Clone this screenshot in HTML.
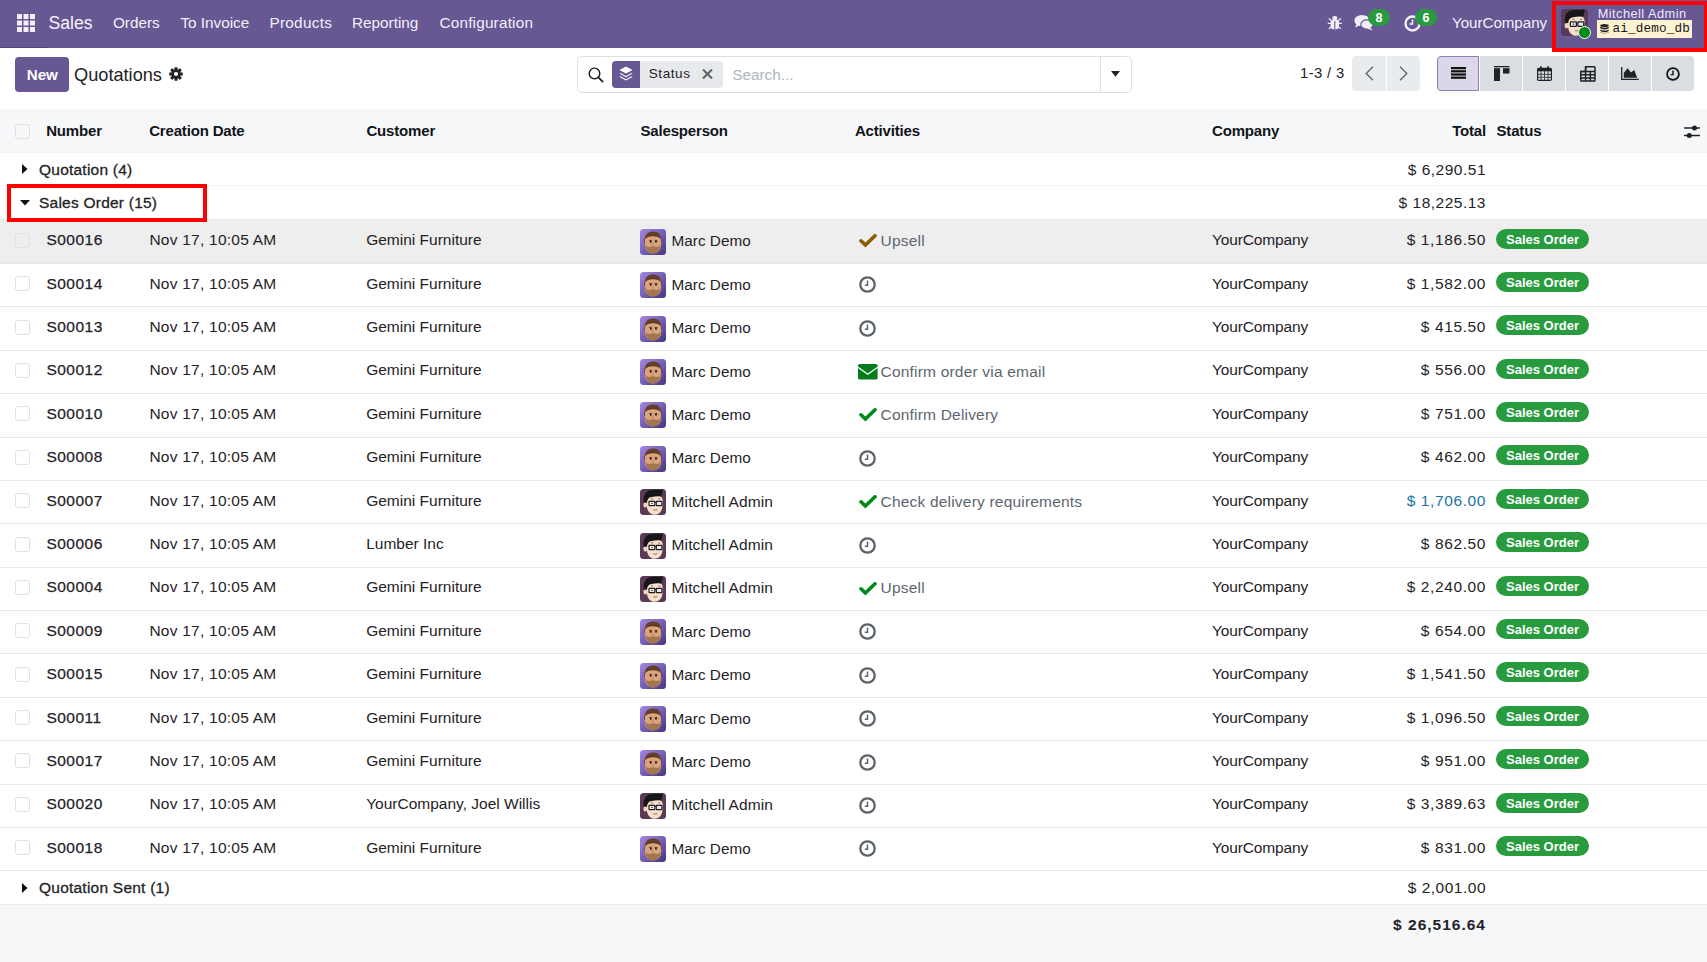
<!DOCTYPE html>
<html><head><meta charset="utf-8"><title>Quotations</title><style>
html,body{margin:0;padding:0;width:1707px;height:962px;overflow:hidden;background:#fff;font-family:"Liberation Sans", sans-serif;}
.a{position:absolute;white-space:nowrap;}
.cb{width:15px;height:15px;border:1px solid #dfe1e4;border-radius:3px;box-sizing:border-box;background:transparent;}
.badge{background:#2a9a40;color:#fff;border-radius:9px;font-size:12.5px;font-weight:bold;text-align:center;line-height:18.6px;}
.sbadge{width:93px;height:20px;border-radius:10px;background:#289b3e;color:#fff;font-size:13px;font-weight:bold;line-height:21px;text-align:center;}
</style></head>
<body>
<div class="a" style="left:0;top:0;width:1707px;height:48px;background:#675893"></div>
<div class="a" style="left:0;top:47px;width:1707px;height:1px;background:#62558c"></div>
<div class="a" style="left:0;top:47px;width:48px;height:1px;background:#54487a"></div>
<svg class="a" style="left:17px;top:14px" width="18" height="18" viewBox="0 0 18 18"><rect x="0.0" y="0.0" width="5" height="5" fill="#f3f0fa"/><rect x="6.5" y="0.0" width="5" height="5" fill="#f3f0fa"/><rect x="13.0" y="0.0" width="5" height="5" fill="#f3f0fa"/><rect x="0.0" y="6.5" width="5" height="5" fill="#f3f0fa"/><rect x="6.5" y="6.5" width="5" height="5" fill="#f3f0fa"/><rect x="13.0" y="6.5" width="5" height="5" fill="#f3f0fa"/><rect x="0.0" y="13.0" width="5" height="5" fill="#f3f0fa"/><rect x="6.5" y="13.0" width="5" height="5" fill="#f3f0fa"/><rect x="13.0" y="13.0" width="5" height="5" fill="#f3f0fa"/></svg>
<div class="a" style="left:48.50px;top:12.54px;font-size:17.6px;line-height:21.12px;color:#f6f4fb;font-weight:normal;">Sales</div>
<div class="a" style="left:112.90px;top:14.02px;font-size:15.3px;line-height:18.36px;color:#f2eff8;font-weight:normal;">Orders</div>
<div class="a" style="left:180.40px;top:14.02px;font-size:15.3px;line-height:18.36px;color:#f2eff8;font-weight:normal;">To Invoice</div>
<div class="a" style="left:269.40px;top:14.02px;font-size:15.3px;line-height:18.36px;color:#f2eff8;font-weight:normal;letter-spacing:0.3px;">Products</div>
<div class="a" style="left:352.00px;top:14.02px;font-size:15.3px;line-height:18.36px;color:#f2eff8;font-weight:normal;">Reporting</div>
<div class="a" style="left:439.50px;top:14.02px;font-size:15.3px;line-height:18.36px;color:#f2eff8;font-weight:normal;letter-spacing:0.2px;">Configuration</div>
<svg class="a" style="left:1327px;top:15px" width="15" height="15" viewBox="0 0 15 15"><ellipse cx="7.8" cy="2.9" rx="2.6" ry="2" fill="#f2eff8"/><rect x="3.6" y="4.6" width="8.4" height="9.6" rx="3" fill="#f2eff8"/><path d="M7.8 6 V14" stroke="#675893" stroke-width="1.1"/><path d="M3.8 8.3 H0.8 M11.8 8.3 H14.8 M4.2 5.4 L1.8 3.4 M11.4 5.4 L13.8 3.4 M4.2 11.6 L1.8 13.9 M11.4 11.6 L13.8 13.9" stroke="#f2eff8" stroke-width="1.3"/></svg>
<svg class="a" style="left:1354px;top:14px" width="20" height="17" viewBox="0 0 20 17"><ellipse cx="8" cy="6.5" rx="7.6" ry="5.6" fill="#f2eff8"/><path d="M2.5 10 L1.2 13.5 L6 11.3Z" fill="#f2eff8"/><ellipse cx="13" cy="10.5" rx="6.2" ry="4.6" fill="#f2eff8" stroke="#675893" stroke-width="1.2"/><path d="M16 13.5 L19 16.5 L13 14.5Z" fill="#f2eff8"/></svg>
<div class="a badge" style="left:1368px;top:9px;width:22px;height:17px">8</div>
<svg class="a" style="left:1403.5px;top:14.5px" width="17" height="17" viewBox="0 0 17 17"><circle cx="8.5" cy="8.5" r="7" fill="none" stroke="#f2eff8" stroke-width="2.4"/><path d="M8.5 4.5 V9 H5.5" fill="none" stroke="#f2eff8" stroke-width="1.6"/></svg>
<div class="a badge" style="left:1415px;top:9px;width:22px;height:17px">6</div>
<div class="a" style="left:1452.00px;top:14.01px;font-size:15.1px;line-height:18.12px;color:#f2eff8;font-weight:normal;">YourCompany</div>
<svg class="a" style="left:1561px;top:9px" width="27" height="27" viewBox="0 0 26 26">
<rect width="26" height="26" rx="3.5" fill="#5a3a56"/>
<ellipse cx="5.4" cy="15.8" rx="1.9" ry="2.8" fill="#f4d3bd"/>
<path d="M6.6 9 C7.5 7 11 6.6 15 6.6 C19.5 6.6 22.4 7.5 22.6 11 L22.6 16 C22.4 22 19.2 25.8 14.6 25.8 C10.5 25.8 7.3 22.8 6.8 17 Z" fill="#f8dfcb"/>
<path d="M3.8 13.5 C3 8.5 4.5 3.5 8.5 1.8 C12.5 0.4 18 1.2 22.8 0.6 C22.6 3.5 22 6 21 7.4 C18 7 14 7.4 10.5 8.3 C8.6 8.8 7.3 10.5 6.9 13.6 C5.8 13.8 4.8 13.8 3.8 13.5 Z" fill="#171717"/>
<path d="M11 10 L13 9.9 M18.3 9.9 L20.3 10" stroke="#5a3a2a" stroke-width="0.7"/>
<rect x="9" y="12.3" width="5.8" height="4.4" rx="0.6" fill="#f3f3f3" stroke="#1e1e1e" stroke-width="1.2"/>
<rect x="16.3" y="12.3" width="5.6" height="4.4" rx="0.6" fill="#e9e9e9" stroke="#1e1e1e" stroke-width="1.2"/>
<path d="M14.8 13.3 L16.3 13.3" stroke="#1e1e1e" stroke-width="1"/>
<circle cx="12" cy="14.5" r="0.8" fill="#333"/>
<path d="M13 19.9 Q15.2 21.6 17.4 19.8 L17 21 Q15.2 22 13.5 21 Z" fill="#7d5547"/>
</svg>
<div class="a" style="left:1577.5px;top:25.5px;width:13px;height:13px;border-radius:50%;background:#008a1c;border:1.5px solid #fff;box-sizing:border-box"></div>
<div class="a" style="left:1597.70px;top:6.08px;font-size:12.8px;line-height:15.36px;color:#efe9fb;font-weight:normal;letter-spacing:0.45px;">Mitchell Admin</div>
<div class="a" style="left:1597px;top:20px;width:95px;height:18px;background:#fdf3d2"></div>
<svg class="a" style="left:1599.5px;top:24px" width="9" height="10" viewBox="0 0 9 10"><ellipse cx="4.5" cy="1.6" rx="4.2" ry="1.5" fill="#222"/><path d="M0.3 2.6 Q4.5 5 8.7 2.6 V4.2 Q4.5 6.6 0.3 4.2Z M0.3 5.4 Q4.5 7.8 8.7 5.4 V7 Q4.5 9.4 0.3 7Z M0.3 8 Q4.5 10.4 8.7 8 V8.6 Q4.5 10.5 0.3 8.6Z" fill="#222"/></svg>
<div class="a" style="left:1612.50px;top:21.18px;font-size:12.7px;line-height:15.24px;color:#1a1a1a;font-weight:normal;font-family:'Liberation Mono',monospace;letter-spacing:0.15px;">ai_demo_db</div>
<div class="a" style="left:1552px;top:1px;width:156px;height:51px;border:4px solid #ff0000;box-sizing:border-box"></div>
<div class="a" style="left:15px;top:57px;width:54px;height:35px;background:#675893;border-radius:4px"></div>
<div class="a" style="left:26.70px;top:65.51px;font-size:15.2px;line-height:18.24px;color:#ffffff;font-weight:bold;">New</div>
<div class="a" style="left:74.00px;top:64.77px;font-size:18.2px;line-height:21.84px;color:#1f2226;font-weight:normal;">Quotations</div>
<svg class="a" style="left:168.5px;top:67.3px" width="14" height="14" viewBox="0 0 14 14"><g fill="#1f2226"><circle cx="7" cy="7" r="4.7"/><rect x="5.5" y="0.2" width="3" height="13.6" rx="0.3"/><rect x="5.5" y="0.2" width="3" height="13.6" rx="0.3" transform="rotate(45 7 7)"/><rect x="5.5" y="0.2" width="3" height="13.6" rx="0.3" transform="rotate(90 7 7)"/><rect x="5.5" y="0.2" width="3" height="13.6" rx="0.3" transform="rotate(135 7 7)"/></g><circle cx="7" cy="7" r="2.1" fill="#fff"/></svg>
<div class="a" style="left:577px;top:56px;width:555px;height:37px;border:1px solid #dcdfe3;border-radius:5px;box-sizing:border-box;background:#fff"></div>
<div class="a" style="left:1100px;top:57px;width:1px;height:35px;background:#dcdfe3"></div>
<svg class="a" style="left:588px;top:66.5px" width="16" height="16" viewBox="0 0 16 16"><circle cx="6.5" cy="6.4" r="5.3" fill="none" stroke="#1a1c20" stroke-width="1.45"/><path d="M10.4 10.3 L14.6 14.6" stroke="#1a1c20" stroke-width="1.7" stroke-linecap="round"/></svg>
<div class="a" style="left:612px;top:61px;width:111px;height:27px;background:#e7e9ed;border-radius:4px"></div>
<div class="a" style="left:612px;top:61px;width:28px;height:27px;background:#675893;border-radius:4px 0 0 4px"></div>
<svg class="a" style="left:619px;top:65.5px" width="14" height="15" viewBox="0 0 14 15"><path d="M7 0.5 L13.5 4 L7 7.5 L0.5 4 Z" fill="#fff"/><path d="M1.5 7 L7 10 L12.5 7 L13.5 7.6 L7 11.2 L0.5 7.6 Z" fill="#fff"/><path d="M1.5 10.3 L7 13.3 L12.5 10.3 L13.5 10.9 L7 14.5 L0.5 10.9 Z" fill="#fff"/></svg>
<div class="a" style="left:648.70px;top:65.83px;font-size:13.6px;line-height:16.32px;color:#1f2226;font-weight:normal;letter-spacing:0.55px;">Status</div>
<svg class="a" style="left:701.5px;top:69px" width="11" height="10" viewBox="0 0 11 10"><path d="M1 0.5 L10 9.5 M10 0.5 L1 9.5" stroke="#5f646b" stroke-width="2.1"/></svg>
<div class="a" style="left:732.30px;top:65.92px;font-size:15.3px;line-height:18.36px;color:#b0b5be;font-weight:normal;">Search...</div>
<svg class="a" style="left:1111px;top:71px" width="9" height="6" viewBox="0 0 9 6"><path d="M0 0 H9 L4.5 5.8Z" fill="#1f2226"/></svg>
<div class="a" style="left:1300.00px;top:64.69px;font-size:14.8px;line-height:17.76px;color:#1f2226;font-weight:normal;letter-spacing:0.4px;">1-3 / 3</div>
<div class="a" style="left:1352px;top:56px;width:68px;height:34.5px;background:#e9ecee;border-radius:4px"></div>
<div class="a" style="left:1386px;top:56px;width:1px;height:34.5px;background:#fff"></div>
<svg class="a" style="left:1365px;top:65.5px" width="9" height="15" viewBox="0 0 9 15"><path d="M8 0.7 L1.2 7.5 L8 14.3" fill="none" stroke="#5f646b" stroke-width="1.3"/></svg>
<svg class="a" style="left:1399px;top:65.5px" width="9" height="15" viewBox="0 0 9 15"><path d="M1 0.7 L7.8 7.5 L1 14.3" fill="none" stroke="#5f646b" stroke-width="1.3"/></svg>
<div class="a" style="left:1437px;top:56px;width:42px;height:35px;background:#dbd7e8;border:1px solid #8b7fb5;box-sizing:border-box;border-radius:4px 0 0 4px;"></div>
<div class="a" style="left:1480px;top:56px;width:42px;height:35px;background:#dadde1;"></div>
<div class="a" style="left:1523px;top:56px;width:42px;height:35px;background:#dadde1;"></div>
<div class="a" style="left:1566px;top:56px;width:42px;height:35px;background:#dadde1;"></div>
<div class="a" style="left:1609px;top:56px;width:42px;height:35px;background:#dadde1;"></div>
<div class="a" style="left:1652px;top:56px;width:42px;height:35px;background:#dadde1;border-radius:0 4px 4px 0;"></div>
<svg class="a" style="left:1450.5px;top:67px" width="15" height="12" viewBox="0 0 15 12"><g fill="#111"><rect y="0" width="15" height="2.2"/><rect y="3.2" width="15" height="2.2"/><rect y="6.4" width="15" height="2.2"/><rect y="9.6" width="15" height="2.2"/></g></svg>
<svg class="a" style="left:1493.5px;top:65.5px" width="16" height="15" viewBox="0 0 16 15"><g fill="#1f2226"><rect x="0" y="0" width="15.5" height="1.3"/><rect x="0" y="2.2" width="6" height="12.8"/><rect x="9" y="2.2" width="6.5" height="5.3"/></g></svg>
<svg class="a" style="left:1537px;top:65.5px" width="15" height="15" viewBox="0 0 15 15"><rect x="0.6" y="2.3" width="13.8" height="12.1" rx="1.2" fill="none" stroke="#1f2226" stroke-width="1.2"/><rect x="0.6" y="2.3" width="13.8" height="3" fill="#1f2226"/><rect x="3" y="0.3" width="1.8" height="3.5" rx="0.5" fill="#1f2226"/><rect x="10.2" y="0.3" width="1.8" height="3.5" rx="0.5" fill="#1f2226"/><path d="M0.6 8.3 H14.4 M0.6 11.3 H14.4 M4 5 V14.4 M7.5 5 V14.4 M11 5 V14.4" stroke="#1f2226" stroke-width="0.8"/></svg>
<svg class="a" style="left:1579.5px;top:65.8px" width="16" height="16" viewBox="0 0 16 16"><path d="M5.6 0.8 H14.2 Q15 0.8 15 1.6 V14.2 Q15 15 14.2 15 H1.6 Q0.8 15 0.8 14.2 V5.6 H5.6 Z" fill="none" stroke="#1f2226" stroke-width="1.5"/><path d="M5.6 0.8 V15 M10.3 5.6 V15 M0.8 5.6 H15 M0.8 8.8 H15 M0.8 12 H15" stroke="#1f2226" stroke-width="1.5"/></svg>
<svg class="a" style="left:1621px;top:67px" width="18" height="13" viewBox="0 0 18 13"><path d="M0.7 0 V12.3 H17.8" fill="none" stroke="#1f2226" stroke-width="1.3"/><path d="M2.8 10.8 V5.8 L6.6 1.2 L10 5.6 L13.2 3 L16.2 10.8 Z" fill="#1f2226"/></svg>
<svg class="a" style="left:1666px;top:67px" width="14" height="14" viewBox="0 0 14 14"><circle cx="7" cy="7" r="5.9" fill="none" stroke="#111" stroke-width="1.8"/><path d="M7 3.5 V7.6 H4.6" fill="none" stroke="#111" stroke-width="1.4"/></svg>
<div class="a" style="left:0;top:109px;width:1707px;height:43.5px;background:#f6f7f9;border-bottom:1px solid #f1f2f4;box-sizing:border-box"></div>
<div class="a cb" style="left:15.3px;top:124px"></div>
<div class="a" style="left:46.20px;top:122.30px;font-size:15px;line-height:18.0px;color:#111418;font-weight:bold;letter-spacing:-0.17px;">Number</div>
<div class="a" style="left:149.20px;top:122.30px;font-size:15px;line-height:18.0px;color:#111418;font-weight:bold;letter-spacing:-0.17px;">Creation Date</div>
<div class="a" style="left:366.40px;top:122.30px;font-size:15px;line-height:18.0px;color:#111418;font-weight:bold;letter-spacing:-0.17px;">Customer</div>
<div class="a" style="left:640.50px;top:122.30px;font-size:15px;line-height:18.0px;color:#111418;font-weight:bold;letter-spacing:-0.17px;">Salesperson</div>
<div class="a" style="left:854.90px;top:122.30px;font-size:15px;line-height:18.0px;color:#111418;font-weight:bold;letter-spacing:-0.17px;">Activities</div>
<div class="a" style="left:1212.00px;top:122.30px;font-size:15px;line-height:18.0px;color:#111418;font-weight:bold;letter-spacing:-0.17px;">Company</div>
<div class="a" style="left:1496.50px;top:122.30px;font-size:15px;line-height:18.0px;color:#111418;font-weight:bold;letter-spacing:-0.17px;">Status</div>
<div class="a" style="right:221.00px;top:122.30px;font-size:15px;line-height:18.0px;color:#111418;font-weight:bold;letter-spacing:-0.17px;">Total</div>
<svg class="a" style="left:1684px;top:124px" width="16" height="15" viewBox="0 0 16 15"><path d="M0.5 4 H15.5 M0.5 11.5 H15.5" stroke="#1f2226" stroke-width="1.5" stroke-linecap="round"/><circle cx="10.5" cy="4" r="2.5" fill="#1f2226"/><circle cx="5.3" cy="11.5" r="2.5" fill="#1f2226"/></svg>
<div class="a" style="left:0;top:152.5px;width:1707px;height:33px;border-bottom:1px solid #f4f4f5;box-sizing:border-box;background:#fff"></div>
<svg class="a" style="left:21.5px;top:164.10px" width="6" height="10" viewBox="0 0 6 10"><path d="M0 0 V10 L5.5 5Z" fill="#111"/></svg>
<div class="a" style="left:39.00px;top:160.53px;font-size:15.5px;line-height:18.6px;color:#1f2226;font-weight:normal;-webkit-text-stroke:0.3px #1f2226;letter-spacing:0.23px;">Quotation (4)</div>
<div class="a" style="right:221.00px;top:160.53px;font-size:15.5px;line-height:18.6px;color:#1f2226;font-weight:normal;letter-spacing:0.5px;">$ 6,290.51</div>
<div class="a" style="left:0;top:185.5px;width:1707px;height:34.1px;border-bottom:1px solid #eaeaec;box-sizing:border-box;background:#fff"></div>
<svg class="a" style="left:19.5px;top:199.75px" width="10" height="6" viewBox="0 0 10 6"><path d="M0 0 H10 L5 5.5Z" fill="#111"/></svg>
<div class="a" style="left:39.00px;top:194.08px;font-size:15.5px;line-height:18.6px;color:#1f2226;font-weight:normal;-webkit-text-stroke:0.3px #1f2226;letter-spacing:0.23px;">Sales Order (15)</div>
<div class="a" style="right:221.00px;top:194.08px;font-size:15.5px;line-height:18.6px;color:#1f2226;font-weight:normal;letter-spacing:0.5px;">$ 18,225.13</div>
<div class="a" style="left:0;top:219.6px;width:1707px;height:44.39px;background:#eeeeee;border-bottom:1px solid #e7e8ea;box-sizing:border-box"></div>
<div class="a cb" style="left:15px;top:232.8px"></div>
<div class="a" style="left:46.40px;top:231.23px;font-size:15.5px;line-height:18.6px;color:#1f2226;font-weight:normal;-webkit-text-stroke:0.25px #1f2226;letter-spacing:0.5px;">S00016</div>
<div class="a" style="left:149.40px;top:231.23px;font-size:15.5px;line-height:18.6px;color:#1f2226;font-weight:normal;letter-spacing:0.24px;">Nov 17, 10:05 AM</div>
<div class="a" style="left:366.20px;top:231.23px;font-size:15.5px;line-height:18.6px;color:#1f2226;font-weight:normal;">Gemini Furniture</div>
<svg class="a" style="left:640px;top:228.9px" width="26" height="26" viewBox="0 0 26 26">
<defs><linearGradient id="gm228" x1="0" y1="0" x2="1" y2="1"><stop offset="0" stop-color="#a487e0"/><stop offset="0.5" stop-color="#7560b8"/><stop offset="1" stop-color="#44357f"/></linearGradient></defs>
<rect width="26" height="26" rx="3.5" fill="url(#gm228)"/>
<path d="M4.3 14 C3.8 6 8 2.3 13 2.4 C18.5 2.5 22 6 21.6 14 Z" fill="#5e3b22"/>
<path d="M5 12 C5 6.5 8.5 4.8 13 4.8 C17.5 4.8 21 6.5 21 12 L21.2 16 C21 21.5 17.5 24.3 13 24.3 C8.5 24.3 5 21.5 4.8 16 Z" fill="#dba47c"/>
<path d="M4.9 14.5 C5.6 21.5 8.8 24.5 13 24.5 C17.2 24.5 20.4 21.5 21.1 14.5 C20 17.5 18.5 18.2 16.5 18 C15 17.8 14 17.3 13 17.3 C12 17.3 11 17.8 9.5 18 C7.5 18.2 6 17.5 4.9 14.5 Z" fill="#a47650"/>
<path d="M5 10.5 C5.5 6 9 4.5 13 4.5 C17 4.5 20.5 6 21 10.5 C19.5 8 16.5 7.2 13 7.2 C9.5 7.2 6.5 8 5 10.5Z" fill="#5e3b22"/>
<path d="M9 11.6 L12 11.3 M14.5 11.3 L17.5 11.6" stroke="#4a2e1a" stroke-width="0.8"/>
<circle cx="10.8" cy="12.8" r="0.95" fill="#1a1a1a"/><circle cx="16" cy="12.8" r="0.95" fill="#1a1a1a"/>
<path d="M12.8 13.5 L12.4 16 L13.6 16.2" fill="none" stroke="#b87f58" stroke-width="0.7"/>
</svg>
<div class="a" style="left:671.60px;top:232.42px;font-size:15.3px;line-height:18.36px;color:#1f2226;font-weight:normal;">Marc Demo</div>
<svg class="a" style="left:858.5px;top:234.4px" width="18" height="14" viewBox="0 0 18 14"><path d="M2 6.8 L6.4 11 L16 1.8" fill="none" stroke="#8c5c00" stroke-width="3.6" stroke-linejoin="miter" stroke-linecap="round"/></svg>
<div class="a" style="left:880.50px;top:232.33px;font-size:15.5px;line-height:18.6px;color:#5d6570;font-weight:normal;letter-spacing:0.2px;">Upsell</div>
<div class="a" style="left:1212.00px;top:231.23px;font-size:15.5px;line-height:18.6px;color:#1f2226;font-weight:normal;letter-spacing:-0.15px;">YourCompany</div>
<div class="a" style="right:221.00px;top:231.23px;font-size:15.5px;line-height:18.6px;color:#1f2226;font-weight:normal;letter-spacing:0.6px;">$ 1,186.50</div>
<div class="a sbadge" style="left:1496px;top:228.5px">Sales Order</div>
<div class="a" style="left:0;top:263.99px;width:1707px;height:43.39px;background:#ffffff;border-bottom:1px solid #e7e8ea;box-sizing:border-box"></div>
<div class="a cb" style="left:15px;top:276.19px"></div>
<div class="a" style="left:46.40px;top:274.62px;font-size:15.5px;line-height:18.6px;color:#1f2226;font-weight:normal;-webkit-text-stroke:0.25px #1f2226;letter-spacing:0.5px;">S00014</div>
<div class="a" style="left:149.40px;top:274.62px;font-size:15.5px;line-height:18.6px;color:#1f2226;font-weight:normal;letter-spacing:0.24px;">Nov 17, 10:05 AM</div>
<div class="a" style="left:366.20px;top:274.62px;font-size:15.5px;line-height:18.6px;color:#1f2226;font-weight:normal;">Gemini Furniture</div>
<svg class="a" style="left:640px;top:272.29px" width="26" height="26" viewBox="0 0 26 26">
<defs><linearGradient id="gm272" x1="0" y1="0" x2="1" y2="1"><stop offset="0" stop-color="#a487e0"/><stop offset="0.5" stop-color="#7560b8"/><stop offset="1" stop-color="#44357f"/></linearGradient></defs>
<rect width="26" height="26" rx="3.5" fill="url(#gm272)"/>
<path d="M4.3 14 C3.8 6 8 2.3 13 2.4 C18.5 2.5 22 6 21.6 14 Z" fill="#5e3b22"/>
<path d="M5 12 C5 6.5 8.5 4.8 13 4.8 C17.5 4.8 21 6.5 21 12 L21.2 16 C21 21.5 17.5 24.3 13 24.3 C8.5 24.3 5 21.5 4.8 16 Z" fill="#dba47c"/>
<path d="M4.9 14.5 C5.6 21.5 8.8 24.5 13 24.5 C17.2 24.5 20.4 21.5 21.1 14.5 C20 17.5 18.5 18.2 16.5 18 C15 17.8 14 17.3 13 17.3 C12 17.3 11 17.8 9.5 18 C7.5 18.2 6 17.5 4.9 14.5 Z" fill="#a47650"/>
<path d="M5 10.5 C5.5 6 9 4.5 13 4.5 C17 4.5 20.5 6 21 10.5 C19.5 8 16.5 7.2 13 7.2 C9.5 7.2 6.5 8 5 10.5Z" fill="#5e3b22"/>
<path d="M9 11.6 L12 11.3 M14.5 11.3 L17.5 11.6" stroke="#4a2e1a" stroke-width="0.8"/>
<circle cx="10.8" cy="12.8" r="0.95" fill="#1a1a1a"/><circle cx="16" cy="12.8" r="0.95" fill="#1a1a1a"/>
<path d="M12.8 13.5 L12.4 16 L13.6 16.2" fill="none" stroke="#b87f58" stroke-width="0.7"/>
</svg>
<div class="a" style="left:671.60px;top:275.81px;font-size:15.3px;line-height:18.36px;color:#1f2226;font-weight:normal;">Marc Demo</div>
<svg class="a" style="left:859px;top:276.29px" width="17" height="17" viewBox="0 0 17 17"><circle cx="8.5" cy="8.5" r="7.2" fill="none" stroke="#5c636b" stroke-width="2.3"/><path d="M8.5 4.4 V9.3 H5.8" fill="none" stroke="#5c636b" stroke-width="1.5"/></svg>
<div class="a" style="left:1212.00px;top:274.62px;font-size:15.5px;line-height:18.6px;color:#1f2226;font-weight:normal;letter-spacing:-0.15px;">YourCompany</div>
<div class="a" style="right:221.00px;top:274.62px;font-size:15.5px;line-height:18.6px;color:#1f2226;font-weight:normal;letter-spacing:0.6px;">$ 1,582.00</div>
<div class="a sbadge" style="left:1496px;top:271.89px">Sales Order</div>
<div class="a" style="left:0;top:307.38px;width:1707px;height:43.39px;background:#ffffff;border-bottom:1px solid #e7e8ea;box-sizing:border-box"></div>
<div class="a cb" style="left:15px;top:319.58px"></div>
<div class="a" style="left:46.40px;top:318.01px;font-size:15.5px;line-height:18.6px;color:#1f2226;font-weight:normal;-webkit-text-stroke:0.25px #1f2226;letter-spacing:0.5px;">S00013</div>
<div class="a" style="left:149.40px;top:318.01px;font-size:15.5px;line-height:18.6px;color:#1f2226;font-weight:normal;letter-spacing:0.24px;">Nov 17, 10:05 AM</div>
<div class="a" style="left:366.20px;top:318.01px;font-size:15.5px;line-height:18.6px;color:#1f2226;font-weight:normal;">Gemini Furniture</div>
<svg class="a" style="left:640px;top:315.68px" width="26" height="26" viewBox="0 0 26 26">
<defs><linearGradient id="gm315" x1="0" y1="0" x2="1" y2="1"><stop offset="0" stop-color="#a487e0"/><stop offset="0.5" stop-color="#7560b8"/><stop offset="1" stop-color="#44357f"/></linearGradient></defs>
<rect width="26" height="26" rx="3.5" fill="url(#gm315)"/>
<path d="M4.3 14 C3.8 6 8 2.3 13 2.4 C18.5 2.5 22 6 21.6 14 Z" fill="#5e3b22"/>
<path d="M5 12 C5 6.5 8.5 4.8 13 4.8 C17.5 4.8 21 6.5 21 12 L21.2 16 C21 21.5 17.5 24.3 13 24.3 C8.5 24.3 5 21.5 4.8 16 Z" fill="#dba47c"/>
<path d="M4.9 14.5 C5.6 21.5 8.8 24.5 13 24.5 C17.2 24.5 20.4 21.5 21.1 14.5 C20 17.5 18.5 18.2 16.5 18 C15 17.8 14 17.3 13 17.3 C12 17.3 11 17.8 9.5 18 C7.5 18.2 6 17.5 4.9 14.5 Z" fill="#a47650"/>
<path d="M5 10.5 C5.5 6 9 4.5 13 4.5 C17 4.5 20.5 6 21 10.5 C19.5 8 16.5 7.2 13 7.2 C9.5 7.2 6.5 8 5 10.5Z" fill="#5e3b22"/>
<path d="M9 11.6 L12 11.3 M14.5 11.3 L17.5 11.6" stroke="#4a2e1a" stroke-width="0.8"/>
<circle cx="10.8" cy="12.8" r="0.95" fill="#1a1a1a"/><circle cx="16" cy="12.8" r="0.95" fill="#1a1a1a"/>
<path d="M12.8 13.5 L12.4 16 L13.6 16.2" fill="none" stroke="#b87f58" stroke-width="0.7"/>
</svg>
<div class="a" style="left:671.60px;top:319.20px;font-size:15.3px;line-height:18.36px;color:#1f2226;font-weight:normal;">Marc Demo</div>
<svg class="a" style="left:859px;top:319.68px" width="17" height="17" viewBox="0 0 17 17"><circle cx="8.5" cy="8.5" r="7.2" fill="none" stroke="#5c636b" stroke-width="2.3"/><path d="M8.5 4.4 V9.3 H5.8" fill="none" stroke="#5c636b" stroke-width="1.5"/></svg>
<div class="a" style="left:1212.00px;top:318.01px;font-size:15.5px;line-height:18.6px;color:#1f2226;font-weight:normal;letter-spacing:-0.15px;">YourCompany</div>
<div class="a" style="right:221.00px;top:318.01px;font-size:15.5px;line-height:18.6px;color:#1f2226;font-weight:normal;letter-spacing:0.6px;">$ 415.50</div>
<div class="a sbadge" style="left:1496px;top:315.28px">Sales Order</div>
<div class="a" style="left:0;top:350.77px;width:1707px;height:43.39px;background:#ffffff;border-bottom:1px solid #e7e8ea;box-sizing:border-box"></div>
<div class="a cb" style="left:15px;top:362.97px"></div>
<div class="a" style="left:46.40px;top:361.40px;font-size:15.5px;line-height:18.6px;color:#1f2226;font-weight:normal;-webkit-text-stroke:0.25px #1f2226;letter-spacing:0.5px;">S00012</div>
<div class="a" style="left:149.40px;top:361.40px;font-size:15.5px;line-height:18.6px;color:#1f2226;font-weight:normal;letter-spacing:0.24px;">Nov 17, 10:05 AM</div>
<div class="a" style="left:366.20px;top:361.40px;font-size:15.5px;line-height:18.6px;color:#1f2226;font-weight:normal;">Gemini Furniture</div>
<svg class="a" style="left:640px;top:359.07px" width="26" height="26" viewBox="0 0 26 26">
<defs><linearGradient id="gm359" x1="0" y1="0" x2="1" y2="1"><stop offset="0" stop-color="#a487e0"/><stop offset="0.5" stop-color="#7560b8"/><stop offset="1" stop-color="#44357f"/></linearGradient></defs>
<rect width="26" height="26" rx="3.5" fill="url(#gm359)"/>
<path d="M4.3 14 C3.8 6 8 2.3 13 2.4 C18.5 2.5 22 6 21.6 14 Z" fill="#5e3b22"/>
<path d="M5 12 C5 6.5 8.5 4.8 13 4.8 C17.5 4.8 21 6.5 21 12 L21.2 16 C21 21.5 17.5 24.3 13 24.3 C8.5 24.3 5 21.5 4.8 16 Z" fill="#dba47c"/>
<path d="M4.9 14.5 C5.6 21.5 8.8 24.5 13 24.5 C17.2 24.5 20.4 21.5 21.1 14.5 C20 17.5 18.5 18.2 16.5 18 C15 17.8 14 17.3 13 17.3 C12 17.3 11 17.8 9.5 18 C7.5 18.2 6 17.5 4.9 14.5 Z" fill="#a47650"/>
<path d="M5 10.5 C5.5 6 9 4.5 13 4.5 C17 4.5 20.5 6 21 10.5 C19.5 8 16.5 7.2 13 7.2 C9.5 7.2 6.5 8 5 10.5Z" fill="#5e3b22"/>
<path d="M9 11.6 L12 11.3 M14.5 11.3 L17.5 11.6" stroke="#4a2e1a" stroke-width="0.8"/>
<circle cx="10.8" cy="12.8" r="0.95" fill="#1a1a1a"/><circle cx="16" cy="12.8" r="0.95" fill="#1a1a1a"/>
<path d="M12.8 13.5 L12.4 16 L13.6 16.2" fill="none" stroke="#b87f58" stroke-width="0.7"/>
</svg>
<div class="a" style="left:671.60px;top:362.59px;font-size:15.3px;line-height:18.36px;color:#1f2226;font-weight:normal;">Marc Demo</div>
<svg class="a" style="left:857.6px;top:363.97px" width="20" height="16" viewBox="0 0 20 16"><rect x="0" y="0" width="19.6" height="15.5" rx="1.6" fill="#077c1c"/><path d="M0 3.3 L9.8 10.3 L19.6 3.3" fill="none" stroke="#fff" stroke-width="1.3"/></svg>
<div class="a" style="left:880.50px;top:362.50px;font-size:15.5px;line-height:18.6px;color:#5d6570;font-weight:normal;letter-spacing:0.2px;">Confirm order via email</div>
<div class="a" style="left:1212.00px;top:361.40px;font-size:15.5px;line-height:18.6px;color:#1f2226;font-weight:normal;letter-spacing:-0.15px;">YourCompany</div>
<div class="a" style="right:221.00px;top:361.40px;font-size:15.5px;line-height:18.6px;color:#1f2226;font-weight:normal;letter-spacing:0.6px;">$ 556.00</div>
<div class="a sbadge" style="left:1496px;top:358.67px">Sales Order</div>
<div class="a" style="left:0;top:394.16px;width:1707px;height:43.39px;background:#ffffff;border-bottom:1px solid #e7e8ea;box-sizing:border-box"></div>
<div class="a cb" style="left:15px;top:406.36px"></div>
<div class="a" style="left:46.40px;top:404.79px;font-size:15.5px;line-height:18.6px;color:#1f2226;font-weight:normal;-webkit-text-stroke:0.25px #1f2226;letter-spacing:0.5px;">S00010</div>
<div class="a" style="left:149.40px;top:404.79px;font-size:15.5px;line-height:18.6px;color:#1f2226;font-weight:normal;letter-spacing:0.24px;">Nov 17, 10:05 AM</div>
<div class="a" style="left:366.20px;top:404.79px;font-size:15.5px;line-height:18.6px;color:#1f2226;font-weight:normal;">Gemini Furniture</div>
<svg class="a" style="left:640px;top:402.46px" width="26" height="26" viewBox="0 0 26 26">
<defs><linearGradient id="gm402" x1="0" y1="0" x2="1" y2="1"><stop offset="0" stop-color="#a487e0"/><stop offset="0.5" stop-color="#7560b8"/><stop offset="1" stop-color="#44357f"/></linearGradient></defs>
<rect width="26" height="26" rx="3.5" fill="url(#gm402)"/>
<path d="M4.3 14 C3.8 6 8 2.3 13 2.4 C18.5 2.5 22 6 21.6 14 Z" fill="#5e3b22"/>
<path d="M5 12 C5 6.5 8.5 4.8 13 4.8 C17.5 4.8 21 6.5 21 12 L21.2 16 C21 21.5 17.5 24.3 13 24.3 C8.5 24.3 5 21.5 4.8 16 Z" fill="#dba47c"/>
<path d="M4.9 14.5 C5.6 21.5 8.8 24.5 13 24.5 C17.2 24.5 20.4 21.5 21.1 14.5 C20 17.5 18.5 18.2 16.5 18 C15 17.8 14 17.3 13 17.3 C12 17.3 11 17.8 9.5 18 C7.5 18.2 6 17.5 4.9 14.5 Z" fill="#a47650"/>
<path d="M5 10.5 C5.5 6 9 4.5 13 4.5 C17 4.5 20.5 6 21 10.5 C19.5 8 16.5 7.2 13 7.2 C9.5 7.2 6.5 8 5 10.5Z" fill="#5e3b22"/>
<path d="M9 11.6 L12 11.3 M14.5 11.3 L17.5 11.6" stroke="#4a2e1a" stroke-width="0.8"/>
<circle cx="10.8" cy="12.8" r="0.95" fill="#1a1a1a"/><circle cx="16" cy="12.8" r="0.95" fill="#1a1a1a"/>
<path d="M12.8 13.5 L12.4 16 L13.6 16.2" fill="none" stroke="#b87f58" stroke-width="0.7"/>
</svg>
<div class="a" style="left:671.60px;top:405.98px;font-size:15.3px;line-height:18.36px;color:#1f2226;font-weight:normal;">Marc Demo</div>
<svg class="a" style="left:858.5px;top:407.96px" width="18" height="14" viewBox="0 0 18 14"><path d="M2 6.8 L6.4 11 L16 1.8" fill="none" stroke="#008a1c" stroke-width="3.6" stroke-linejoin="miter" stroke-linecap="round"/></svg>
<div class="a" style="left:880.50px;top:405.89px;font-size:15.5px;line-height:18.6px;color:#5d6570;font-weight:normal;letter-spacing:0.2px;">Confirm Delivery</div>
<div class="a" style="left:1212.00px;top:404.79px;font-size:15.5px;line-height:18.6px;color:#1f2226;font-weight:normal;letter-spacing:-0.15px;">YourCompany</div>
<div class="a" style="right:221.00px;top:404.79px;font-size:15.5px;line-height:18.6px;color:#1f2226;font-weight:normal;letter-spacing:0.6px;">$ 751.00</div>
<div class="a sbadge" style="left:1496px;top:402.06px">Sales Order</div>
<div class="a" style="left:0;top:437.55px;width:1707px;height:43.39px;background:#ffffff;border-bottom:1px solid #e7e8ea;box-sizing:border-box"></div>
<div class="a cb" style="left:15px;top:449.75px"></div>
<div class="a" style="left:46.40px;top:448.18px;font-size:15.5px;line-height:18.6px;color:#1f2226;font-weight:normal;-webkit-text-stroke:0.25px #1f2226;letter-spacing:0.5px;">S00008</div>
<div class="a" style="left:149.40px;top:448.18px;font-size:15.5px;line-height:18.6px;color:#1f2226;font-weight:normal;letter-spacing:0.24px;">Nov 17, 10:05 AM</div>
<div class="a" style="left:366.20px;top:448.18px;font-size:15.5px;line-height:18.6px;color:#1f2226;font-weight:normal;">Gemini Furniture</div>
<svg class="a" style="left:640px;top:445.85px" width="26" height="26" viewBox="0 0 26 26">
<defs><linearGradient id="gm445" x1="0" y1="0" x2="1" y2="1"><stop offset="0" stop-color="#a487e0"/><stop offset="0.5" stop-color="#7560b8"/><stop offset="1" stop-color="#44357f"/></linearGradient></defs>
<rect width="26" height="26" rx="3.5" fill="url(#gm445)"/>
<path d="M4.3 14 C3.8 6 8 2.3 13 2.4 C18.5 2.5 22 6 21.6 14 Z" fill="#5e3b22"/>
<path d="M5 12 C5 6.5 8.5 4.8 13 4.8 C17.5 4.8 21 6.5 21 12 L21.2 16 C21 21.5 17.5 24.3 13 24.3 C8.5 24.3 5 21.5 4.8 16 Z" fill="#dba47c"/>
<path d="M4.9 14.5 C5.6 21.5 8.8 24.5 13 24.5 C17.2 24.5 20.4 21.5 21.1 14.5 C20 17.5 18.5 18.2 16.5 18 C15 17.8 14 17.3 13 17.3 C12 17.3 11 17.8 9.5 18 C7.5 18.2 6 17.5 4.9 14.5 Z" fill="#a47650"/>
<path d="M5 10.5 C5.5 6 9 4.5 13 4.5 C17 4.5 20.5 6 21 10.5 C19.5 8 16.5 7.2 13 7.2 C9.5 7.2 6.5 8 5 10.5Z" fill="#5e3b22"/>
<path d="M9 11.6 L12 11.3 M14.5 11.3 L17.5 11.6" stroke="#4a2e1a" stroke-width="0.8"/>
<circle cx="10.8" cy="12.8" r="0.95" fill="#1a1a1a"/><circle cx="16" cy="12.8" r="0.95" fill="#1a1a1a"/>
<path d="M12.8 13.5 L12.4 16 L13.6 16.2" fill="none" stroke="#b87f58" stroke-width="0.7"/>
</svg>
<div class="a" style="left:671.60px;top:449.37px;font-size:15.3px;line-height:18.36px;color:#1f2226;font-weight:normal;">Marc Demo</div>
<svg class="a" style="left:859px;top:449.85px" width="17" height="17" viewBox="0 0 17 17"><circle cx="8.5" cy="8.5" r="7.2" fill="none" stroke="#5c636b" stroke-width="2.3"/><path d="M8.5 4.4 V9.3 H5.8" fill="none" stroke="#5c636b" stroke-width="1.5"/></svg>
<div class="a" style="left:1212.00px;top:448.18px;font-size:15.5px;line-height:18.6px;color:#1f2226;font-weight:normal;letter-spacing:-0.15px;">YourCompany</div>
<div class="a" style="right:221.00px;top:448.18px;font-size:15.5px;line-height:18.6px;color:#1f2226;font-weight:normal;letter-spacing:0.6px;">$ 462.00</div>
<div class="a sbadge" style="left:1496px;top:445.45px">Sales Order</div>
<div class="a" style="left:0;top:480.94px;width:1707px;height:43.39px;background:#ffffff;border-bottom:1px solid #e7e8ea;box-sizing:border-box"></div>
<div class="a cb" style="left:15px;top:493.14px"></div>
<div class="a" style="left:46.40px;top:491.57px;font-size:15.5px;line-height:18.6px;color:#1f2226;font-weight:normal;-webkit-text-stroke:0.25px #1f2226;letter-spacing:0.5px;">S00007</div>
<div class="a" style="left:149.40px;top:491.57px;font-size:15.5px;line-height:18.6px;color:#1f2226;font-weight:normal;letter-spacing:0.24px;">Nov 17, 10:05 AM</div>
<div class="a" style="left:366.20px;top:491.57px;font-size:15.5px;line-height:18.6px;color:#1f2226;font-weight:normal;">Gemini Furniture</div>
<svg class="a" style="left:640px;top:489.24px" width="26" height="26" viewBox="0 0 26 26">
<rect width="26" height="26" rx="3.5" fill="#5a3a56"/>
<ellipse cx="5.4" cy="15.8" rx="1.9" ry="2.8" fill="#f4d3bd"/>
<path d="M6.6 9 C7.5 7 11 6.6 15 6.6 C19.5 6.6 22.4 7.5 22.6 11 L22.6 16 C22.4 22 19.2 25.8 14.6 25.8 C10.5 25.8 7.3 22.8 6.8 17 Z" fill="#f8dfcb"/>
<path d="M3.8 13.5 C3 8.5 4.5 3.5 8.5 1.8 C12.5 0.4 18 1.2 22.8 0.6 C22.6 3.5 22 6 21 7.4 C18 7 14 7.4 10.5 8.3 C8.6 8.8 7.3 10.5 6.9 13.6 C5.8 13.8 4.8 13.8 3.8 13.5 Z" fill="#171717"/>
<path d="M11 10 L13 9.9 M18.3 9.9 L20.3 10" stroke="#5a3a2a" stroke-width="0.7"/>
<rect x="9" y="12.3" width="5.8" height="4.4" rx="0.6" fill="#f3f3f3" stroke="#1e1e1e" stroke-width="1.2"/>
<rect x="16.3" y="12.3" width="5.6" height="4.4" rx="0.6" fill="#e9e9e9" stroke="#1e1e1e" stroke-width="1.2"/>
<path d="M14.8 13.3 L16.3 13.3" stroke="#1e1e1e" stroke-width="1"/>
<circle cx="12" cy="14.5" r="0.8" fill="#333"/>
<path d="M13 19.9 Q15.2 21.6 17.4 19.8 L17 21 Q15.2 22 13.5 21 Z" fill="#7d5547"/>
</svg>
<div class="a" style="left:671.60px;top:492.57px;font-size:15.5px;line-height:18.6px;color:#1f2226;font-weight:normal;letter-spacing:0.1px;">Mitchell Admin</div>
<svg class="a" style="left:858.5px;top:494.74px" width="18" height="14" viewBox="0 0 18 14"><path d="M2 6.8 L6.4 11 L16 1.8" fill="none" stroke="#008a1c" stroke-width="3.6" stroke-linejoin="miter" stroke-linecap="round"/></svg>
<div class="a" style="left:880.50px;top:492.67px;font-size:15.5px;line-height:18.6px;color:#5d6570;font-weight:normal;letter-spacing:0.2px;">Check delivery requirements</div>
<div class="a" style="left:1212.00px;top:491.57px;font-size:15.5px;line-height:18.6px;color:#1f2226;font-weight:normal;letter-spacing:-0.15px;">YourCompany</div>
<div class="a" style="right:221.00px;top:491.57px;font-size:15.5px;line-height:18.6px;color:#1a74a3;font-weight:normal;letter-spacing:0.6px;">$ 1,706.00</div>
<div class="a sbadge" style="left:1496px;top:488.84px">Sales Order</div>
<div class="a" style="left:0;top:524.33px;width:1707px;height:43.39px;background:#ffffff;border-bottom:1px solid #e7e8ea;box-sizing:border-box"></div>
<div class="a cb" style="left:15px;top:536.53px"></div>
<div class="a" style="left:46.40px;top:534.96px;font-size:15.5px;line-height:18.6px;color:#1f2226;font-weight:normal;-webkit-text-stroke:0.25px #1f2226;letter-spacing:0.5px;">S00006</div>
<div class="a" style="left:149.40px;top:534.96px;font-size:15.5px;line-height:18.6px;color:#1f2226;font-weight:normal;letter-spacing:0.24px;">Nov 17, 10:05 AM</div>
<div class="a" style="left:366.20px;top:534.96px;font-size:15.5px;line-height:18.6px;color:#1f2226;font-weight:normal;">Lumber Inc</div>
<svg class="a" style="left:640px;top:532.63px" width="26" height="26" viewBox="0 0 26 26">
<rect width="26" height="26" rx="3.5" fill="#5a3a56"/>
<ellipse cx="5.4" cy="15.8" rx="1.9" ry="2.8" fill="#f4d3bd"/>
<path d="M6.6 9 C7.5 7 11 6.6 15 6.6 C19.5 6.6 22.4 7.5 22.6 11 L22.6 16 C22.4 22 19.2 25.8 14.6 25.8 C10.5 25.8 7.3 22.8 6.8 17 Z" fill="#f8dfcb"/>
<path d="M3.8 13.5 C3 8.5 4.5 3.5 8.5 1.8 C12.5 0.4 18 1.2 22.8 0.6 C22.6 3.5 22 6 21 7.4 C18 7 14 7.4 10.5 8.3 C8.6 8.8 7.3 10.5 6.9 13.6 C5.8 13.8 4.8 13.8 3.8 13.5 Z" fill="#171717"/>
<path d="M11 10 L13 9.9 M18.3 9.9 L20.3 10" stroke="#5a3a2a" stroke-width="0.7"/>
<rect x="9" y="12.3" width="5.8" height="4.4" rx="0.6" fill="#f3f3f3" stroke="#1e1e1e" stroke-width="1.2"/>
<rect x="16.3" y="12.3" width="5.6" height="4.4" rx="0.6" fill="#e9e9e9" stroke="#1e1e1e" stroke-width="1.2"/>
<path d="M14.8 13.3 L16.3 13.3" stroke="#1e1e1e" stroke-width="1"/>
<circle cx="12" cy="14.5" r="0.8" fill="#333"/>
<path d="M13 19.9 Q15.2 21.6 17.4 19.8 L17 21 Q15.2 22 13.5 21 Z" fill="#7d5547"/>
</svg>
<div class="a" style="left:671.60px;top:535.96px;font-size:15.5px;line-height:18.6px;color:#1f2226;font-weight:normal;letter-spacing:0.1px;">Mitchell Admin</div>
<svg class="a" style="left:859px;top:536.63px" width="17" height="17" viewBox="0 0 17 17"><circle cx="8.5" cy="8.5" r="7.2" fill="none" stroke="#5c636b" stroke-width="2.3"/><path d="M8.5 4.4 V9.3 H5.8" fill="none" stroke="#5c636b" stroke-width="1.5"/></svg>
<div class="a" style="left:1212.00px;top:534.96px;font-size:15.5px;line-height:18.6px;color:#1f2226;font-weight:normal;letter-spacing:-0.15px;">YourCompany</div>
<div class="a" style="right:221.00px;top:534.96px;font-size:15.5px;line-height:18.6px;color:#1f2226;font-weight:normal;letter-spacing:0.6px;">$ 862.50</div>
<div class="a sbadge" style="left:1496px;top:532.23px">Sales Order</div>
<div class="a" style="left:0;top:567.72px;width:1707px;height:43.39px;background:#ffffff;border-bottom:1px solid #e7e8ea;box-sizing:border-box"></div>
<div class="a cb" style="left:15px;top:579.92px"></div>
<div class="a" style="left:46.40px;top:578.35px;font-size:15.5px;line-height:18.6px;color:#1f2226;font-weight:normal;-webkit-text-stroke:0.25px #1f2226;letter-spacing:0.5px;">S00004</div>
<div class="a" style="left:149.40px;top:578.35px;font-size:15.5px;line-height:18.6px;color:#1f2226;font-weight:normal;letter-spacing:0.24px;">Nov 17, 10:05 AM</div>
<div class="a" style="left:366.20px;top:578.35px;font-size:15.5px;line-height:18.6px;color:#1f2226;font-weight:normal;">Gemini Furniture</div>
<svg class="a" style="left:640px;top:576.02px" width="26" height="26" viewBox="0 0 26 26">
<rect width="26" height="26" rx="3.5" fill="#5a3a56"/>
<ellipse cx="5.4" cy="15.8" rx="1.9" ry="2.8" fill="#f4d3bd"/>
<path d="M6.6 9 C7.5 7 11 6.6 15 6.6 C19.5 6.6 22.4 7.5 22.6 11 L22.6 16 C22.4 22 19.2 25.8 14.6 25.8 C10.5 25.8 7.3 22.8 6.8 17 Z" fill="#f8dfcb"/>
<path d="M3.8 13.5 C3 8.5 4.5 3.5 8.5 1.8 C12.5 0.4 18 1.2 22.8 0.6 C22.6 3.5 22 6 21 7.4 C18 7 14 7.4 10.5 8.3 C8.6 8.8 7.3 10.5 6.9 13.6 C5.8 13.8 4.8 13.8 3.8 13.5 Z" fill="#171717"/>
<path d="M11 10 L13 9.9 M18.3 9.9 L20.3 10" stroke="#5a3a2a" stroke-width="0.7"/>
<rect x="9" y="12.3" width="5.8" height="4.4" rx="0.6" fill="#f3f3f3" stroke="#1e1e1e" stroke-width="1.2"/>
<rect x="16.3" y="12.3" width="5.6" height="4.4" rx="0.6" fill="#e9e9e9" stroke="#1e1e1e" stroke-width="1.2"/>
<path d="M14.8 13.3 L16.3 13.3" stroke="#1e1e1e" stroke-width="1"/>
<circle cx="12" cy="14.5" r="0.8" fill="#333"/>
<path d="M13 19.9 Q15.2 21.6 17.4 19.8 L17 21 Q15.2 22 13.5 21 Z" fill="#7d5547"/>
</svg>
<div class="a" style="left:671.60px;top:579.35px;font-size:15.5px;line-height:18.6px;color:#1f2226;font-weight:normal;letter-spacing:0.1px;">Mitchell Admin</div>
<svg class="a" style="left:858.5px;top:581.52px" width="18" height="14" viewBox="0 0 18 14"><path d="M2 6.8 L6.4 11 L16 1.8" fill="none" stroke="#008a1c" stroke-width="3.6" stroke-linejoin="miter" stroke-linecap="round"/></svg>
<div class="a" style="left:880.50px;top:579.45px;font-size:15.5px;line-height:18.6px;color:#5d6570;font-weight:normal;letter-spacing:0.2px;">Upsell</div>
<div class="a" style="left:1212.00px;top:578.35px;font-size:15.5px;line-height:18.6px;color:#1f2226;font-weight:normal;letter-spacing:-0.15px;">YourCompany</div>
<div class="a" style="right:221.00px;top:578.35px;font-size:15.5px;line-height:18.6px;color:#1f2226;font-weight:normal;letter-spacing:0.6px;">$ 2,240.00</div>
<div class="a sbadge" style="left:1496px;top:575.62px">Sales Order</div>
<div class="a" style="left:0;top:611.11px;width:1707px;height:43.39px;background:#ffffff;border-bottom:1px solid #e7e8ea;box-sizing:border-box"></div>
<div class="a cb" style="left:15px;top:623.31px"></div>
<div class="a" style="left:46.40px;top:621.74px;font-size:15.5px;line-height:18.6px;color:#1f2226;font-weight:normal;-webkit-text-stroke:0.25px #1f2226;letter-spacing:0.5px;">S00009</div>
<div class="a" style="left:149.40px;top:621.74px;font-size:15.5px;line-height:18.6px;color:#1f2226;font-weight:normal;letter-spacing:0.24px;">Nov 17, 10:05 AM</div>
<div class="a" style="left:366.20px;top:621.74px;font-size:15.5px;line-height:18.6px;color:#1f2226;font-weight:normal;">Gemini Furniture</div>
<svg class="a" style="left:640px;top:619.41px" width="26" height="26" viewBox="0 0 26 26">
<defs><linearGradient id="gm619" x1="0" y1="0" x2="1" y2="1"><stop offset="0" stop-color="#a487e0"/><stop offset="0.5" stop-color="#7560b8"/><stop offset="1" stop-color="#44357f"/></linearGradient></defs>
<rect width="26" height="26" rx="3.5" fill="url(#gm619)"/>
<path d="M4.3 14 C3.8 6 8 2.3 13 2.4 C18.5 2.5 22 6 21.6 14 Z" fill="#5e3b22"/>
<path d="M5 12 C5 6.5 8.5 4.8 13 4.8 C17.5 4.8 21 6.5 21 12 L21.2 16 C21 21.5 17.5 24.3 13 24.3 C8.5 24.3 5 21.5 4.8 16 Z" fill="#dba47c"/>
<path d="M4.9 14.5 C5.6 21.5 8.8 24.5 13 24.5 C17.2 24.5 20.4 21.5 21.1 14.5 C20 17.5 18.5 18.2 16.5 18 C15 17.8 14 17.3 13 17.3 C12 17.3 11 17.8 9.5 18 C7.5 18.2 6 17.5 4.9 14.5 Z" fill="#a47650"/>
<path d="M5 10.5 C5.5 6 9 4.5 13 4.5 C17 4.5 20.5 6 21 10.5 C19.5 8 16.5 7.2 13 7.2 C9.5 7.2 6.5 8 5 10.5Z" fill="#5e3b22"/>
<path d="M9 11.6 L12 11.3 M14.5 11.3 L17.5 11.6" stroke="#4a2e1a" stroke-width="0.8"/>
<circle cx="10.8" cy="12.8" r="0.95" fill="#1a1a1a"/><circle cx="16" cy="12.8" r="0.95" fill="#1a1a1a"/>
<path d="M12.8 13.5 L12.4 16 L13.6 16.2" fill="none" stroke="#b87f58" stroke-width="0.7"/>
</svg>
<div class="a" style="left:671.60px;top:622.93px;font-size:15.3px;line-height:18.36px;color:#1f2226;font-weight:normal;">Marc Demo</div>
<svg class="a" style="left:859px;top:623.41px" width="17" height="17" viewBox="0 0 17 17"><circle cx="8.5" cy="8.5" r="7.2" fill="none" stroke="#5c636b" stroke-width="2.3"/><path d="M8.5 4.4 V9.3 H5.8" fill="none" stroke="#5c636b" stroke-width="1.5"/></svg>
<div class="a" style="left:1212.00px;top:621.74px;font-size:15.5px;line-height:18.6px;color:#1f2226;font-weight:normal;letter-spacing:-0.15px;">YourCompany</div>
<div class="a" style="right:221.00px;top:621.74px;font-size:15.5px;line-height:18.6px;color:#1f2226;font-weight:normal;letter-spacing:0.6px;">$ 654.00</div>
<div class="a sbadge" style="left:1496px;top:619.01px">Sales Order</div>
<div class="a" style="left:0;top:654.50px;width:1707px;height:43.39px;background:#ffffff;border-bottom:1px solid #e7e8ea;box-sizing:border-box"></div>
<div class="a cb" style="left:15px;top:666.7px"></div>
<div class="a" style="left:46.40px;top:665.13px;font-size:15.5px;line-height:18.6px;color:#1f2226;font-weight:normal;-webkit-text-stroke:0.25px #1f2226;letter-spacing:0.5px;">S00015</div>
<div class="a" style="left:149.40px;top:665.13px;font-size:15.5px;line-height:18.6px;color:#1f2226;font-weight:normal;letter-spacing:0.24px;">Nov 17, 10:05 AM</div>
<div class="a" style="left:366.20px;top:665.13px;font-size:15.5px;line-height:18.6px;color:#1f2226;font-weight:normal;">Gemini Furniture</div>
<svg class="a" style="left:640px;top:662.8px" width="26" height="26" viewBox="0 0 26 26">
<defs><linearGradient id="gm662" x1="0" y1="0" x2="1" y2="1"><stop offset="0" stop-color="#a487e0"/><stop offset="0.5" stop-color="#7560b8"/><stop offset="1" stop-color="#44357f"/></linearGradient></defs>
<rect width="26" height="26" rx="3.5" fill="url(#gm662)"/>
<path d="M4.3 14 C3.8 6 8 2.3 13 2.4 C18.5 2.5 22 6 21.6 14 Z" fill="#5e3b22"/>
<path d="M5 12 C5 6.5 8.5 4.8 13 4.8 C17.5 4.8 21 6.5 21 12 L21.2 16 C21 21.5 17.5 24.3 13 24.3 C8.5 24.3 5 21.5 4.8 16 Z" fill="#dba47c"/>
<path d="M4.9 14.5 C5.6 21.5 8.8 24.5 13 24.5 C17.2 24.5 20.4 21.5 21.1 14.5 C20 17.5 18.5 18.2 16.5 18 C15 17.8 14 17.3 13 17.3 C12 17.3 11 17.8 9.5 18 C7.5 18.2 6 17.5 4.9 14.5 Z" fill="#a47650"/>
<path d="M5 10.5 C5.5 6 9 4.5 13 4.5 C17 4.5 20.5 6 21 10.5 C19.5 8 16.5 7.2 13 7.2 C9.5 7.2 6.5 8 5 10.5Z" fill="#5e3b22"/>
<path d="M9 11.6 L12 11.3 M14.5 11.3 L17.5 11.6" stroke="#4a2e1a" stroke-width="0.8"/>
<circle cx="10.8" cy="12.8" r="0.95" fill="#1a1a1a"/><circle cx="16" cy="12.8" r="0.95" fill="#1a1a1a"/>
<path d="M12.8 13.5 L12.4 16 L13.6 16.2" fill="none" stroke="#b87f58" stroke-width="0.7"/>
</svg>
<div class="a" style="left:671.60px;top:666.32px;font-size:15.3px;line-height:18.36px;color:#1f2226;font-weight:normal;">Marc Demo</div>
<svg class="a" style="left:859px;top:666.8px" width="17" height="17" viewBox="0 0 17 17"><circle cx="8.5" cy="8.5" r="7.2" fill="none" stroke="#5c636b" stroke-width="2.3"/><path d="M8.5 4.4 V9.3 H5.8" fill="none" stroke="#5c636b" stroke-width="1.5"/></svg>
<div class="a" style="left:1212.00px;top:665.13px;font-size:15.5px;line-height:18.6px;color:#1f2226;font-weight:normal;letter-spacing:-0.15px;">YourCompany</div>
<div class="a" style="right:221.00px;top:665.13px;font-size:15.5px;line-height:18.6px;color:#1f2226;font-weight:normal;letter-spacing:0.6px;">$ 1,541.50</div>
<div class="a sbadge" style="left:1496px;top:662.4px">Sales Order</div>
<div class="a" style="left:0;top:697.89px;width:1707px;height:43.39px;background:#ffffff;border-bottom:1px solid #e7e8ea;box-sizing:border-box"></div>
<div class="a cb" style="left:15px;top:710.09px"></div>
<div class="a" style="left:46.40px;top:708.52px;font-size:15.5px;line-height:18.6px;color:#1f2226;font-weight:normal;-webkit-text-stroke:0.25px #1f2226;letter-spacing:0.5px;">S00011</div>
<div class="a" style="left:149.40px;top:708.52px;font-size:15.5px;line-height:18.6px;color:#1f2226;font-weight:normal;letter-spacing:0.24px;">Nov 17, 10:05 AM</div>
<div class="a" style="left:366.20px;top:708.52px;font-size:15.5px;line-height:18.6px;color:#1f2226;font-weight:normal;">Gemini Furniture</div>
<svg class="a" style="left:640px;top:706.19px" width="26" height="26" viewBox="0 0 26 26">
<defs><linearGradient id="gm706" x1="0" y1="0" x2="1" y2="1"><stop offset="0" stop-color="#a487e0"/><stop offset="0.5" stop-color="#7560b8"/><stop offset="1" stop-color="#44357f"/></linearGradient></defs>
<rect width="26" height="26" rx="3.5" fill="url(#gm706)"/>
<path d="M4.3 14 C3.8 6 8 2.3 13 2.4 C18.5 2.5 22 6 21.6 14 Z" fill="#5e3b22"/>
<path d="M5 12 C5 6.5 8.5 4.8 13 4.8 C17.5 4.8 21 6.5 21 12 L21.2 16 C21 21.5 17.5 24.3 13 24.3 C8.5 24.3 5 21.5 4.8 16 Z" fill="#dba47c"/>
<path d="M4.9 14.5 C5.6 21.5 8.8 24.5 13 24.5 C17.2 24.5 20.4 21.5 21.1 14.5 C20 17.5 18.5 18.2 16.5 18 C15 17.8 14 17.3 13 17.3 C12 17.3 11 17.8 9.5 18 C7.5 18.2 6 17.5 4.9 14.5 Z" fill="#a47650"/>
<path d="M5 10.5 C5.5 6 9 4.5 13 4.5 C17 4.5 20.5 6 21 10.5 C19.5 8 16.5 7.2 13 7.2 C9.5 7.2 6.5 8 5 10.5Z" fill="#5e3b22"/>
<path d="M9 11.6 L12 11.3 M14.5 11.3 L17.5 11.6" stroke="#4a2e1a" stroke-width="0.8"/>
<circle cx="10.8" cy="12.8" r="0.95" fill="#1a1a1a"/><circle cx="16" cy="12.8" r="0.95" fill="#1a1a1a"/>
<path d="M12.8 13.5 L12.4 16 L13.6 16.2" fill="none" stroke="#b87f58" stroke-width="0.7"/>
</svg>
<div class="a" style="left:671.60px;top:709.71px;font-size:15.3px;line-height:18.36px;color:#1f2226;font-weight:normal;">Marc Demo</div>
<svg class="a" style="left:859px;top:710.19px" width="17" height="17" viewBox="0 0 17 17"><circle cx="8.5" cy="8.5" r="7.2" fill="none" stroke="#5c636b" stroke-width="2.3"/><path d="M8.5 4.4 V9.3 H5.8" fill="none" stroke="#5c636b" stroke-width="1.5"/></svg>
<div class="a" style="left:1212.00px;top:708.52px;font-size:15.5px;line-height:18.6px;color:#1f2226;font-weight:normal;letter-spacing:-0.15px;">YourCompany</div>
<div class="a" style="right:221.00px;top:708.52px;font-size:15.5px;line-height:18.6px;color:#1f2226;font-weight:normal;letter-spacing:0.6px;">$ 1,096.50</div>
<div class="a sbadge" style="left:1496px;top:705.79px">Sales Order</div>
<div class="a" style="left:0;top:741.28px;width:1707px;height:43.39px;background:#ffffff;border-bottom:1px solid #e7e8ea;box-sizing:border-box"></div>
<div class="a cb" style="left:15px;top:753.48px"></div>
<div class="a" style="left:46.40px;top:751.91px;font-size:15.5px;line-height:18.6px;color:#1f2226;font-weight:normal;-webkit-text-stroke:0.25px #1f2226;letter-spacing:0.5px;">S00017</div>
<div class="a" style="left:149.40px;top:751.91px;font-size:15.5px;line-height:18.6px;color:#1f2226;font-weight:normal;letter-spacing:0.24px;">Nov 17, 10:05 AM</div>
<div class="a" style="left:366.20px;top:751.91px;font-size:15.5px;line-height:18.6px;color:#1f2226;font-weight:normal;">Gemini Furniture</div>
<svg class="a" style="left:640px;top:749.58px" width="26" height="26" viewBox="0 0 26 26">
<defs><linearGradient id="gm749" x1="0" y1="0" x2="1" y2="1"><stop offset="0" stop-color="#a487e0"/><stop offset="0.5" stop-color="#7560b8"/><stop offset="1" stop-color="#44357f"/></linearGradient></defs>
<rect width="26" height="26" rx="3.5" fill="url(#gm749)"/>
<path d="M4.3 14 C3.8 6 8 2.3 13 2.4 C18.5 2.5 22 6 21.6 14 Z" fill="#5e3b22"/>
<path d="M5 12 C5 6.5 8.5 4.8 13 4.8 C17.5 4.8 21 6.5 21 12 L21.2 16 C21 21.5 17.5 24.3 13 24.3 C8.5 24.3 5 21.5 4.8 16 Z" fill="#dba47c"/>
<path d="M4.9 14.5 C5.6 21.5 8.8 24.5 13 24.5 C17.2 24.5 20.4 21.5 21.1 14.5 C20 17.5 18.5 18.2 16.5 18 C15 17.8 14 17.3 13 17.3 C12 17.3 11 17.8 9.5 18 C7.5 18.2 6 17.5 4.9 14.5 Z" fill="#a47650"/>
<path d="M5 10.5 C5.5 6 9 4.5 13 4.5 C17 4.5 20.5 6 21 10.5 C19.5 8 16.5 7.2 13 7.2 C9.5 7.2 6.5 8 5 10.5Z" fill="#5e3b22"/>
<path d="M9 11.6 L12 11.3 M14.5 11.3 L17.5 11.6" stroke="#4a2e1a" stroke-width="0.8"/>
<circle cx="10.8" cy="12.8" r="0.95" fill="#1a1a1a"/><circle cx="16" cy="12.8" r="0.95" fill="#1a1a1a"/>
<path d="M12.8 13.5 L12.4 16 L13.6 16.2" fill="none" stroke="#b87f58" stroke-width="0.7"/>
</svg>
<div class="a" style="left:671.60px;top:753.10px;font-size:15.3px;line-height:18.36px;color:#1f2226;font-weight:normal;">Marc Demo</div>
<svg class="a" style="left:859px;top:753.58px" width="17" height="17" viewBox="0 0 17 17"><circle cx="8.5" cy="8.5" r="7.2" fill="none" stroke="#5c636b" stroke-width="2.3"/><path d="M8.5 4.4 V9.3 H5.8" fill="none" stroke="#5c636b" stroke-width="1.5"/></svg>
<div class="a" style="left:1212.00px;top:751.91px;font-size:15.5px;line-height:18.6px;color:#1f2226;font-weight:normal;letter-spacing:-0.15px;">YourCompany</div>
<div class="a" style="right:221.00px;top:751.91px;font-size:15.5px;line-height:18.6px;color:#1f2226;font-weight:normal;letter-spacing:0.6px;">$ 951.00</div>
<div class="a sbadge" style="left:1496px;top:749.18px">Sales Order</div>
<div class="a" style="left:0;top:784.67px;width:1707px;height:43.39px;background:#ffffff;border-bottom:1px solid #e7e8ea;box-sizing:border-box"></div>
<div class="a cb" style="left:15px;top:796.87px"></div>
<div class="a" style="left:46.40px;top:795.30px;font-size:15.5px;line-height:18.6px;color:#1f2226;font-weight:normal;-webkit-text-stroke:0.25px #1f2226;letter-spacing:0.5px;">S00020</div>
<div class="a" style="left:149.40px;top:795.30px;font-size:15.5px;line-height:18.6px;color:#1f2226;font-weight:normal;letter-spacing:0.24px;">Nov 17, 10:05 AM</div>
<div class="a" style="left:366.20px;top:795.30px;font-size:15.5px;line-height:18.6px;color:#1f2226;font-weight:normal;">YourCompany, Joel Willis</div>
<svg class="a" style="left:640px;top:792.97px" width="26" height="26" viewBox="0 0 26 26">
<rect width="26" height="26" rx="3.5" fill="#5a3a56"/>
<ellipse cx="5.4" cy="15.8" rx="1.9" ry="2.8" fill="#f4d3bd"/>
<path d="M6.6 9 C7.5 7 11 6.6 15 6.6 C19.5 6.6 22.4 7.5 22.6 11 L22.6 16 C22.4 22 19.2 25.8 14.6 25.8 C10.5 25.8 7.3 22.8 6.8 17 Z" fill="#f8dfcb"/>
<path d="M3.8 13.5 C3 8.5 4.5 3.5 8.5 1.8 C12.5 0.4 18 1.2 22.8 0.6 C22.6 3.5 22 6 21 7.4 C18 7 14 7.4 10.5 8.3 C8.6 8.8 7.3 10.5 6.9 13.6 C5.8 13.8 4.8 13.8 3.8 13.5 Z" fill="#171717"/>
<path d="M11 10 L13 9.9 M18.3 9.9 L20.3 10" stroke="#5a3a2a" stroke-width="0.7"/>
<rect x="9" y="12.3" width="5.8" height="4.4" rx="0.6" fill="#f3f3f3" stroke="#1e1e1e" stroke-width="1.2"/>
<rect x="16.3" y="12.3" width="5.6" height="4.4" rx="0.6" fill="#e9e9e9" stroke="#1e1e1e" stroke-width="1.2"/>
<path d="M14.8 13.3 L16.3 13.3" stroke="#1e1e1e" stroke-width="1"/>
<circle cx="12" cy="14.5" r="0.8" fill="#333"/>
<path d="M13 19.9 Q15.2 21.6 17.4 19.8 L17 21 Q15.2 22 13.5 21 Z" fill="#7d5547"/>
</svg>
<div class="a" style="left:671.60px;top:796.30px;font-size:15.5px;line-height:18.6px;color:#1f2226;font-weight:normal;letter-spacing:0.1px;">Mitchell Admin</div>
<svg class="a" style="left:859px;top:796.97px" width="17" height="17" viewBox="0 0 17 17"><circle cx="8.5" cy="8.5" r="7.2" fill="none" stroke="#5c636b" stroke-width="2.3"/><path d="M8.5 4.4 V9.3 H5.8" fill="none" stroke="#5c636b" stroke-width="1.5"/></svg>
<div class="a" style="left:1212.00px;top:795.30px;font-size:15.5px;line-height:18.6px;color:#1f2226;font-weight:normal;letter-spacing:-0.15px;">YourCompany</div>
<div class="a" style="right:221.00px;top:795.30px;font-size:15.5px;line-height:18.6px;color:#1f2226;font-weight:normal;letter-spacing:0.6px;">$ 3,389.63</div>
<div class="a sbadge" style="left:1496px;top:792.57px">Sales Order</div>
<div class="a" style="left:0;top:828.06px;width:1707px;height:43.39px;background:#ffffff;border-bottom:1px solid #e7e8ea;box-sizing:border-box"></div>
<div class="a cb" style="left:15px;top:840.26px"></div>
<div class="a" style="left:46.40px;top:838.69px;font-size:15.5px;line-height:18.6px;color:#1f2226;font-weight:normal;-webkit-text-stroke:0.25px #1f2226;letter-spacing:0.5px;">S00018</div>
<div class="a" style="left:149.40px;top:838.69px;font-size:15.5px;line-height:18.6px;color:#1f2226;font-weight:normal;letter-spacing:0.24px;">Nov 17, 10:05 AM</div>
<div class="a" style="left:366.20px;top:838.69px;font-size:15.5px;line-height:18.6px;color:#1f2226;font-weight:normal;">Gemini Furniture</div>
<svg class="a" style="left:640px;top:836.36px" width="26" height="26" viewBox="0 0 26 26">
<defs><linearGradient id="gm836" x1="0" y1="0" x2="1" y2="1"><stop offset="0" stop-color="#a487e0"/><stop offset="0.5" stop-color="#7560b8"/><stop offset="1" stop-color="#44357f"/></linearGradient></defs>
<rect width="26" height="26" rx="3.5" fill="url(#gm836)"/>
<path d="M4.3 14 C3.8 6 8 2.3 13 2.4 C18.5 2.5 22 6 21.6 14 Z" fill="#5e3b22"/>
<path d="M5 12 C5 6.5 8.5 4.8 13 4.8 C17.5 4.8 21 6.5 21 12 L21.2 16 C21 21.5 17.5 24.3 13 24.3 C8.5 24.3 5 21.5 4.8 16 Z" fill="#dba47c"/>
<path d="M4.9 14.5 C5.6 21.5 8.8 24.5 13 24.5 C17.2 24.5 20.4 21.5 21.1 14.5 C20 17.5 18.5 18.2 16.5 18 C15 17.8 14 17.3 13 17.3 C12 17.3 11 17.8 9.5 18 C7.5 18.2 6 17.5 4.9 14.5 Z" fill="#a47650"/>
<path d="M5 10.5 C5.5 6 9 4.5 13 4.5 C17 4.5 20.5 6 21 10.5 C19.5 8 16.5 7.2 13 7.2 C9.5 7.2 6.5 8 5 10.5Z" fill="#5e3b22"/>
<path d="M9 11.6 L12 11.3 M14.5 11.3 L17.5 11.6" stroke="#4a2e1a" stroke-width="0.8"/>
<circle cx="10.8" cy="12.8" r="0.95" fill="#1a1a1a"/><circle cx="16" cy="12.8" r="0.95" fill="#1a1a1a"/>
<path d="M12.8 13.5 L12.4 16 L13.6 16.2" fill="none" stroke="#b87f58" stroke-width="0.7"/>
</svg>
<div class="a" style="left:671.60px;top:839.88px;font-size:15.3px;line-height:18.36px;color:#1f2226;font-weight:normal;">Marc Demo</div>
<svg class="a" style="left:859px;top:840.36px" width="17" height="17" viewBox="0 0 17 17"><circle cx="8.5" cy="8.5" r="7.2" fill="none" stroke="#5c636b" stroke-width="2.3"/><path d="M8.5 4.4 V9.3 H5.8" fill="none" stroke="#5c636b" stroke-width="1.5"/></svg>
<div class="a" style="left:1212.00px;top:838.69px;font-size:15.5px;line-height:18.6px;color:#1f2226;font-weight:normal;letter-spacing:-0.15px;">YourCompany</div>
<div class="a" style="right:221.00px;top:838.69px;font-size:15.5px;line-height:18.6px;color:#1f2226;font-weight:normal;letter-spacing:0.6px;">$ 831.00</div>
<div class="a sbadge" style="left:1496px;top:835.96px">Sales Order</div>
<div class="a" style="left:0;top:871.45px;width:1707px;height:33.5px;border-bottom:1px solid #ececec;box-sizing:border-box;background:#fff"></div>
<svg class="a" style="left:21.5px;top:882.70px" width="6" height="10" viewBox="0 0 6 10"><path d="M0 0 V10 L5.5 5Z" fill="#111"/></svg>
<div class="a" style="left:39.00px;top:879.13px;font-size:15.5px;line-height:18.6px;color:#1f2226;font-weight:normal;-webkit-text-stroke:0.3px #1f2226;letter-spacing:0.23px;">Quotation Sent (1)</div>
<div class="a" style="right:221.00px;top:879.13px;font-size:15.5px;line-height:18.6px;color:#1f2226;font-weight:normal;letter-spacing:0.5px;">$ 2,001.00</div>
<div class="a" style="left:0;top:904.95px;width:1707px;height:57.05px;background:#f6f7f9"></div>
<div class="a" style="right:221.00px;top:915.53px;font-size:15.5px;line-height:18.6px;color:#1f2226;font-weight:bold;letter-spacing:1.0px;">$ 26,516.64</div>
<div class="a" style="left:7px;top:184px;width:200px;height:38px;border:4px solid #ff0000;box-sizing:border-box"></div>
</body></html>
